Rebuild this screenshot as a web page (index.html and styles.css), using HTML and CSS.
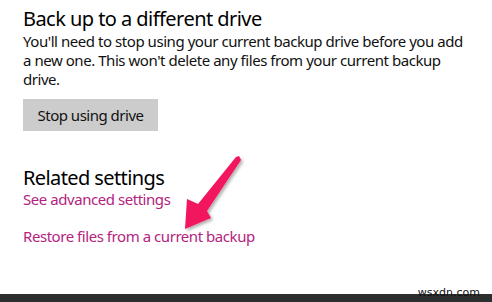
FILE: index.html
```html
<!DOCTYPE html>
<html lang="en">

<head>
    <meta charset="UTF-8">
    <meta name="viewport" content="width=device-width, initial-scale=1.0">
    <title>Backup</title>
    <link rel="stylesheet" href="styles.css">
</head>

<body>
    <div class="page">
        <div class="container">
            <h2>Back up to a different drive</h2>
            <p class="desc">You'll need to stop using your current backup drive before you add a new one. This won't delete any files from your current backup drive.</p>
            <button class="btn">Stop using drive</button>

            <h3>Related settings</h3>
            <a class="link" href="#">See advanced settings</a>
            <a class="link restore" href="#">Restore files from a current backup</a>
        </div>
        <div class="watermark">wsxdn.com</div>
    </div>
    <footer class="bar"></footer>

    <svg class="arrow" width="492" height="302" viewBox="0 0 492 302">
        <defs>
            <filter id="shadow" x="-20%" y="-20%" width="140%" height="140%">
                <feDropShadow dx="2" dy="2" stdDeviation="1.5" flood-color="#000" flood-opacity="0.3" />
            </filter>
        </defs>
        <polygon filter="url(#shadow)" fill="#f2155e"
            points="185,229 187,199 198,204 236,157 239,156 241,160 207,211 211,218" />
    </svg>
</body>

</html>
```

FILE: styles.css
```css
body {
    margin: 0;
    padding: 0;
    background-color: #fff;
    font-family: 'Noto Sans', 'Open Sans', sans-serif;
    color: #000;
    width: 492px;
    height: 302px;
    overflow: hidden;
    position: relative;
}

.page {
    height: 294px;
    display: flex;
    flex-direction: column;
    justify-content: space-between;
}

.container {
    padding-left: 23px;
    padding-right: 0;
    display: flex;
    flex-direction: column;
    align-items: flex-start;
}

h2 {
    font-size: 20px;
    font-weight: 400;
    margin: 6px 0 0 0;
    line-height: 26px;
    letter-spacing: -0.55px;
}

.desc {
    font-size: 15px;
    line-height: 19px;
    margin: 0;
    color: #111;
    letter-spacing: -0.45px;
    max-width: 446px;
}

.btn {
    margin-top: 10px;
    width: 135px;
    height: 32px;
    border: none;
    background-color: #cccccc;
    font-family: inherit;
    font-size: 15px;
    color: #111;
    padding: 0;
    letter-spacing: -0.5px;
}

h3 {
    font-size: 20px;
    font-weight: 400;
    margin: 35px 0 0 0;
    line-height: 24px;
    letter-spacing: -0.6px;
}

.link {
    color: #b3237e;
    text-decoration: none;
    font-size: 15px;
    line-height: 19px;
    letter-spacing: -0.45px;
}

.restore {
    margin-top: 18px;
}

.watermark {
    align-self: flex-end;
    margin-right: 12px;
    font-family: 'DejaVu Sans', sans-serif;
    font-size: 11px;
    line-height: 11px;
    color: #111;
    position: relative;
    top: 4px;
    z-index: 2;
}

.bar {
    height: 8px;
    background-color: #2d2f2f;
}

.arrow {
    position: absolute;
    left: 0;
    top: 0;
    pointer-events: none;
}
```
